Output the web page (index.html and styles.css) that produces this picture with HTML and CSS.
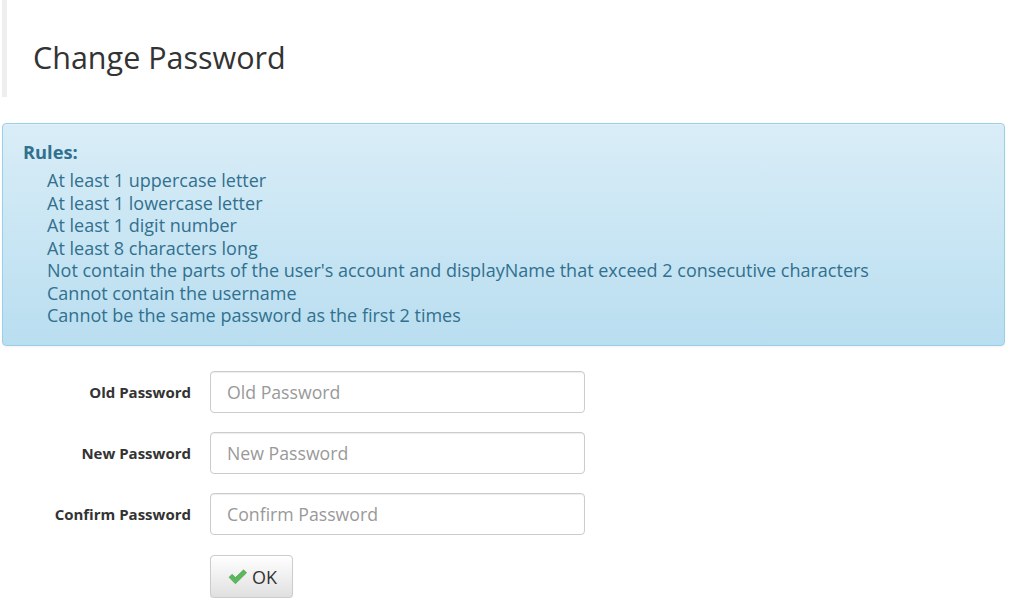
FILE: index.html
```html
<!DOCTYPE html>
<html lang="en">
<head>
<meta charset="utf-8">
<title>Change Password</title>
<link rel="stylesheet" href="styles.css">
</head>
<body>
<div class="page">
  <div class="page-header">
    <h1 class="title">Change Password</h1>
  </div>
  <div class="alert">
    <div class="alert-title">Rules:</div>
    <ul class="rules">
      <li>At least 1 uppercase letter</li>
      <li>At least 1 lowercase letter</li>
      <li>At least 1 digit number</li>
      <li>At least 8 characters long</li>
      <li>Not contain the parts of the user's account and displayName that exceed 2 consecutive characters</li>
      <li>Cannot contain the username</li>
      <li>Cannot be the same password as the first 2 times</li>
    </ul>
  </div>
  <form class="form">
    <div class="row">
      <label class="label" for="old">Old Password</label>
      <input class="input" id="old" type="password" placeholder="Old Password">
    </div>
    <div class="row">
      <label class="label" for="new">New Password</label>
      <input class="input" id="new" type="password" placeholder="New Password">
    </div>
    <div class="row">
      <label class="label" for="confirm">Confirm Password</label>
      <input class="input" id="confirm" type="password" placeholder="Confirm Password">
    </div>
    <div class="row">
      <span class="label"></span>
      <button class="btn" type="button">
        <svg class="check" width="19" height="16" viewBox="0 0 19 16" aria-hidden="true">
          <path d="M1 8.3 L4.2 5.3 L7.4 8.6 L15.6 0.8 L18.6 3.8 L7.4 14.8 Z" fill="#5cb85c" stroke="#449d44" stroke-width="0.6" stroke-linejoin="round"/>
        </svg>
        <span>OK</span>
      </button>
    </div>
  </form>
</div>
</body>
</html>
```

FILE: styles.css
```css
* { box-sizing: border-box; }
html, body { margin: 0; padding: 0; background: #fff; }
body {
  font-family: "Open Sans", "Noto Sans", "Liberation Sans", sans-serif;
  color: #333;
}
.page {
  padding: 0 8px 0 2px;
}
.page-header {
  height: 97px;
  border-left: 5px solid #eeeeee;
  padding-left: 26px;
  display: flex;
  align-items: center;
}
.title {
  margin: 0;
  font-size: 30.5px;
  font-weight: 400;
  color: #333;
  padding-top: 16px;
}
.alert {
  margin-top: 26px;
  height: 223px;
  border: 1px solid #9acfea;
  border-radius: 4px;
  background-image: linear-gradient(to bottom, #d9edf7 0, #b9def0 100%);
  box-shadow: inset 0 1px 0 rgba(255,255,255,.25), 0 1px 2px rgba(0,0,0,.05);
  color: #31708f;
  padding: 16px 20px;
  font-size: 18px;
}
.alert-title {
  font-weight: 700;
  font-size: 18.3px;
  line-height: 24px;
  margin-bottom: 5px;
}
.rules {
  list-style: none;
  margin: 0;
  padding: 0 0 0 24px;
}
.rules li {
  line-height: 22.5px;
}
.form {
  margin-top: 25px;
  display: flex;
  flex-direction: column;
  gap: 19px;
}
.row {
  display: flex;
  align-items: center;
  gap: 19px;
}
.label {
  width: 189px;
  text-align: right;
  font-weight: 700;
  font-size: 15px;
  color: #333;
}
.input {
  width: 375px;
  height: 42px;
  border: 1px solid #ccc;
  border-radius: 4px;
  padding: 0 16px;
  font-family: inherit;
  font-size: 17.7px;
  color: #555;
  box-shadow: inset 0 1px 1px rgba(0,0,0,.075);
}
.input::placeholder { color: #999; }
.btn {
  margin-top: 1px;
  width: 83px;
  height: 43px;
  display: flex;
  align-items: center;
  justify-content: center;
  gap: 5px;
  border: 1px solid #ccc;
  border-radius: 4px;
  background-image: linear-gradient(to bottom, #fff 0, #e0e0e0 100%);
  box-shadow: inset 0 1px 0 rgba(255,255,255,.15), 0 1px 1px rgba(0,0,0,.075);
  font-family: inherit;
  font-size: 18px;
  color: #333;
  padding: 0 0 0 2px;
}
.check { display: block; }
```
